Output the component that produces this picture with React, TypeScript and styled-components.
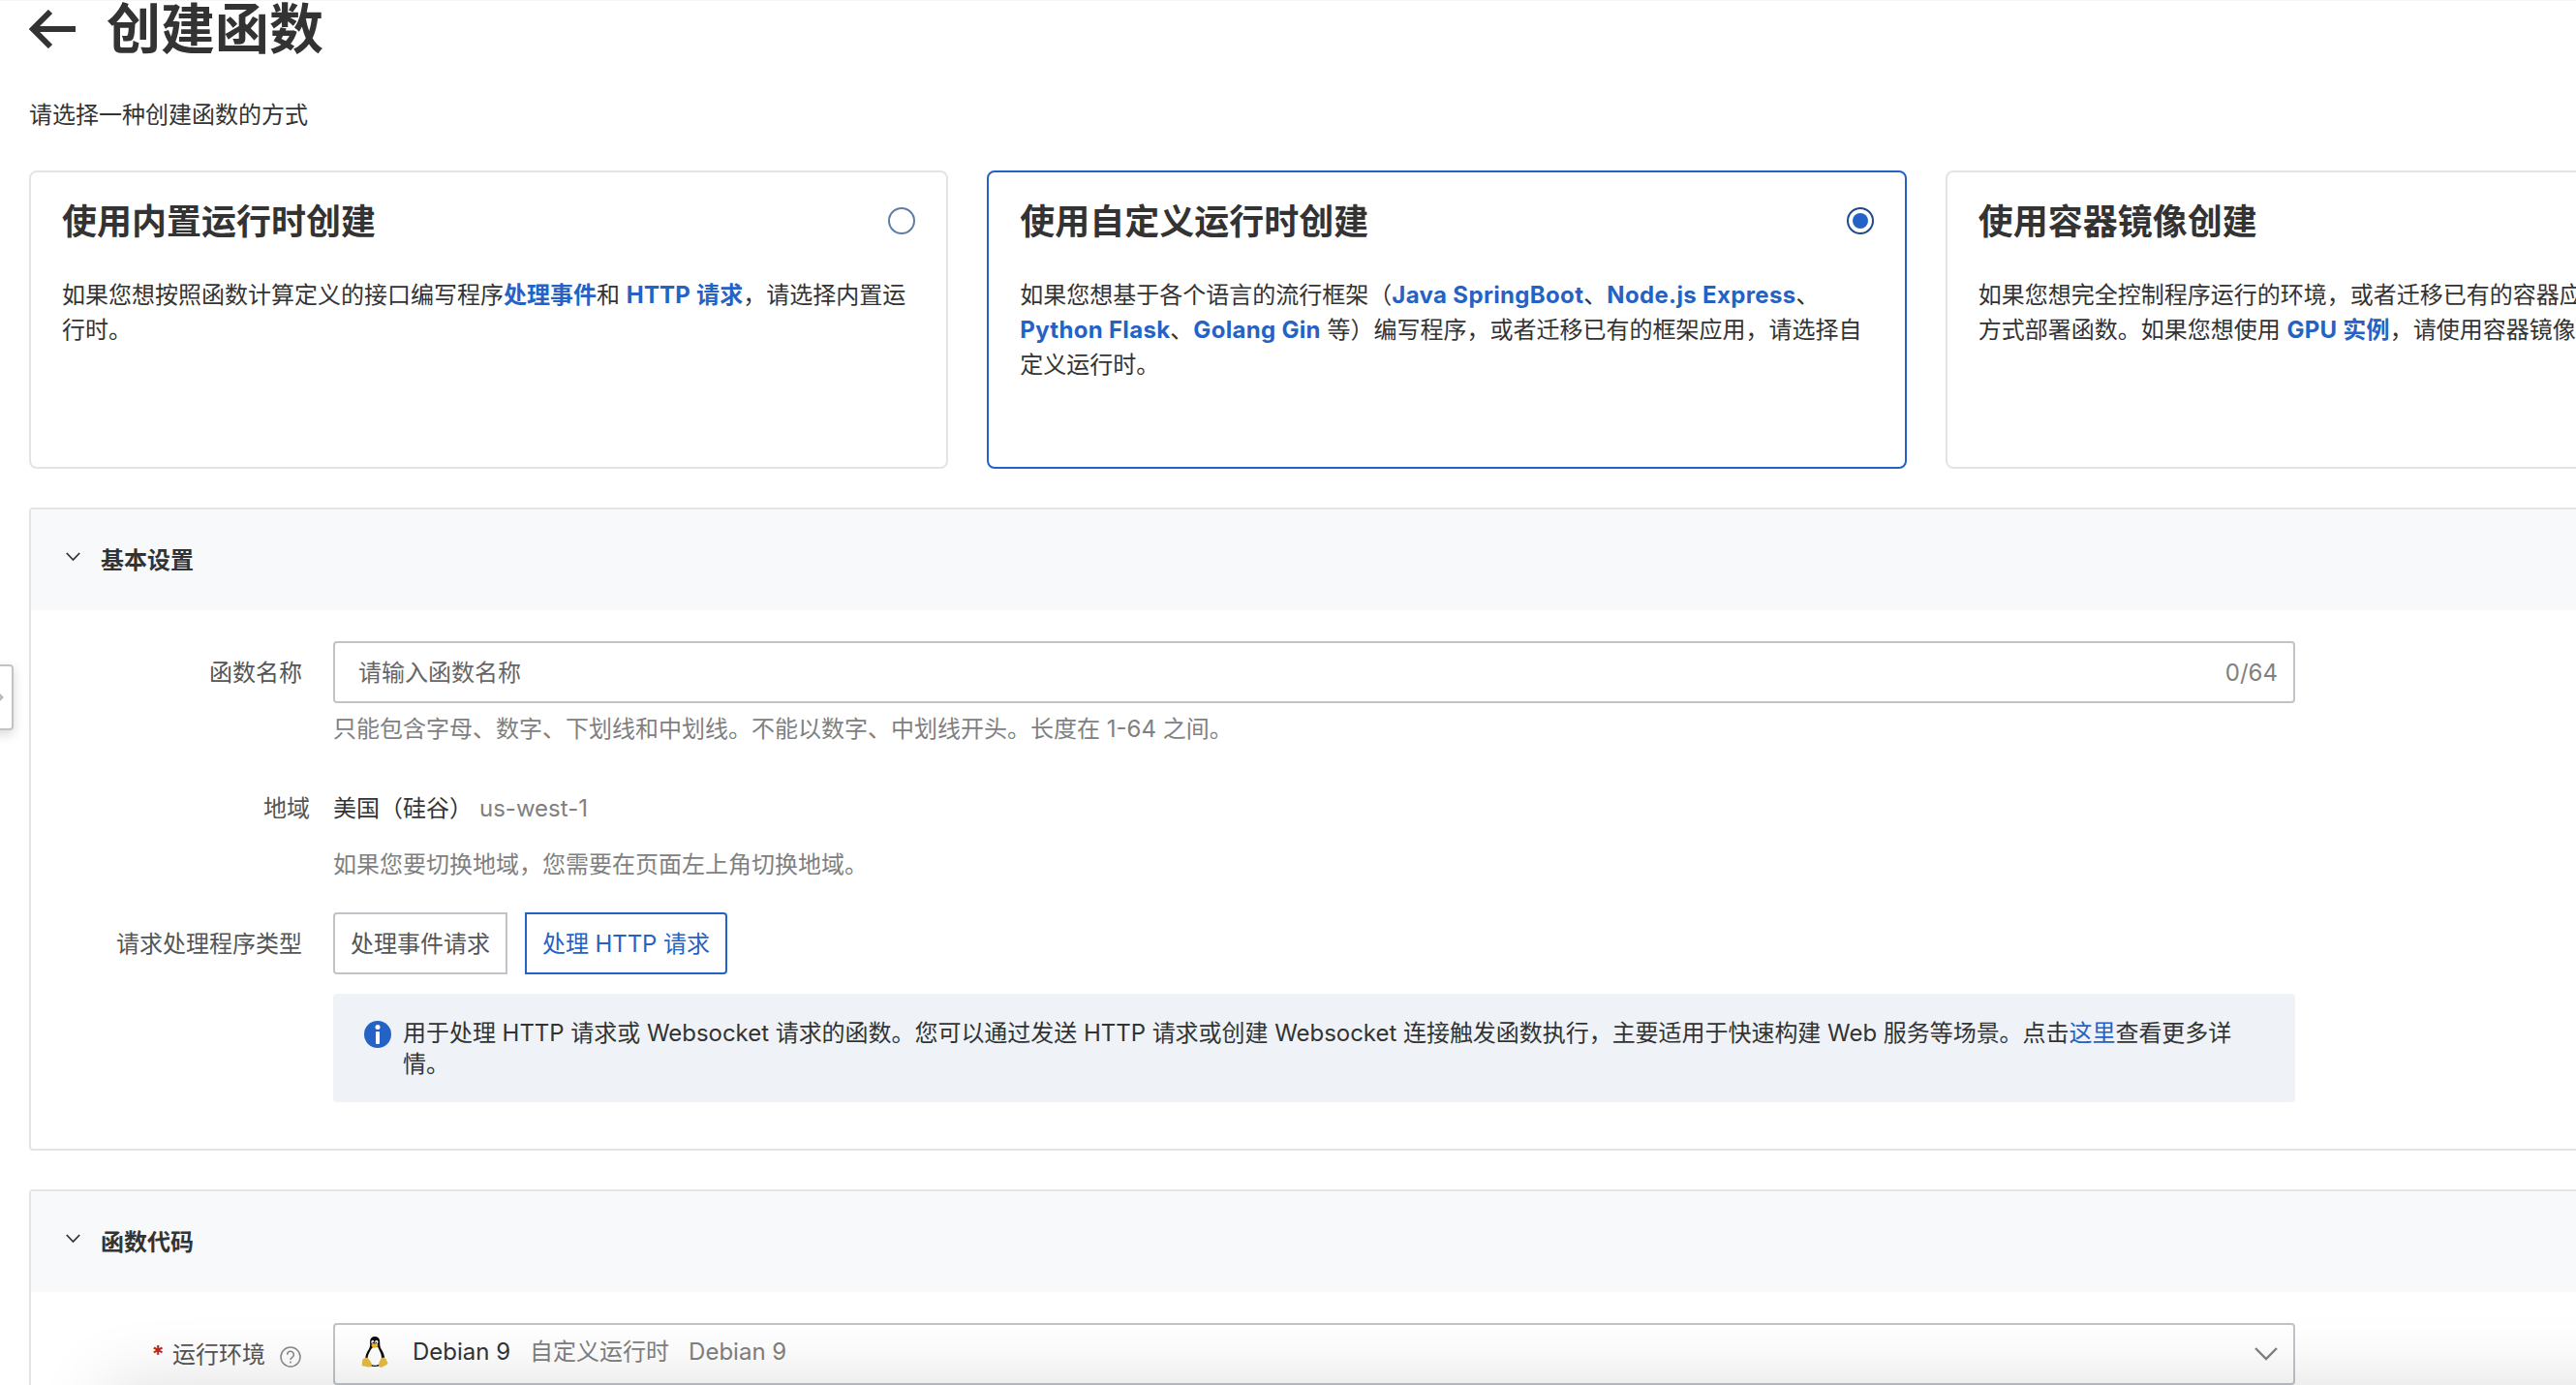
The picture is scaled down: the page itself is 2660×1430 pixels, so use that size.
import React from "react";
import styled, { createGlobalStyle, css } from "styled-components";

const blue = "#2562c5";
const line = "#e3e4e6";
const fieldLine = "#c0c4c9";

const GlobalStyle = createGlobalStyle`
  * { box-sizing: border-box; }
  html, body { margin: 0; background: #fff; overflow: hidden; }
  body {
    color: #333;
    font-family: Inter, "Noto Sans CJK SC", sans-serif;
    font-size: 24px;
    line-height: 36px;
    text-spacing-trim: space-all;
  }
`;

const Page = styled.main`
  position: relative;
  width: 2660px;
  height: 1430px;
  overflow: hidden;
  padding-left: 30px;
  border-top: 1px solid #f6f6f6;
`;

const TitleBar = styled.header`
  display: flex;
  align-items: center;
  gap: 31px;
  height: 58px;
`;

const Title = styled.h1`
  margin: 0;
  font-size: 56px;
  line-height: 58px;
  font-weight: 700;
`;

const Intro = styled.p`
  margin: 42px 0 39px;
`;

const Cards = styled.div`
  display: grid;
  grid-template-columns: repeat(3, 1fr);
  gap: 40px;
  width: 2928px;
`;

const Card = styled.section<{ $selected?: boolean }>`
  height: 308px;
  padding: 32px;
  border: 2px solid ${(p) => (p.$selected ? blue : line)};
  border-radius: 8px;
`;

const CardHead = styled.div`
  display: flex;
  justify-content: space-between;
  align-items: flex-start;
  height: 77px;
`;

const CardTitle = styled.h2`
  margin: 1px 0 0;
  font-size: 36px;
  line-height: 36px;
  font-weight: 700;
`;

const Radio = styled.span<{ $selected?: boolean }>`
  display: grid;
  place-items: center;
  width: 28px;
  height: 28px;
  margin-top: 4px;
  border: 2px solid ${(p) => (p.$selected ? "#1f4a8c" : "#5f7ea6")};
  border-radius: 50%;
  &::after {
    content: "";
    width: 16px;
    height: 16px;
    border-radius: 50%;
    background: ${(p) => (p.$selected ? blue : "transparent")};
  }
`;

const CardText = styled.p`
  margin: 0;
`;

const Strong = styled.b<{ $tracking?: number }>`
  color: ${blue};
  font-weight: 700;
  letter-spacing: ${(p) => p.$tracking ?? 0}px;
`;

const Panel = styled.section<{ $height: number }>`
  width: 2928px;
  height: ${(p) => p.$height}px;
  margin-top: 40px;
  border: 2px solid ${line};
  border-radius: 4px;
`;

const PanelHead = styled.div`
  display: flex;
  align-items: center;
  gap: 21px;
  height: 104px;
  padding-left: 36px;
  background: #f7f9fb;
  svg { margin-bottom: 6px; }
`;

const PanelTitle = styled.h3`
  margin: 2px 0 0;
  font-size: 24px;
  font-weight: 700;
`;

const Form = styled.div`
  display: flex;
  flex-direction: column;
  width: 2338px;
  padding-top: 32px;
`;

const Row = styled.div<{ $height?: number }>`
  display: grid;
  grid-template-columns: 312px 2026px;
  height: ${(p) => (p.$height ? `${p.$height}px` : "auto")};
`;

const Label = styled.label<{ $inset?: number; $height?: number }>`
  display: flex;
  justify-content: flex-end;
  align-items: center;
  height: ${(p) => p.$height ?? 64}px;
  margin-top: 1px;
  padding-right: ${(p) => p.$inset ?? 32}px;
  color: #555;
`;

const Field = styled.div`
  display: flex;
  align-items: center;
  height: 64px;
  padding: 0 16px 0 24px;
  border: 2px solid ${fieldLine};
  border-radius: 4px;
`;

const Placeholder = styled.span`
  flex: 1;
  margin-top: 2px;
  color: #666;
`;

const Muted = styled.span`
  color: #808080;
`;

const Counter = styled(Muted)`
  margin-top: 2px;
`;

const Help = styled.p<{ $top: number }>`
  margin: ${(p) => p.$top}px 0 0;
  color: #808080;
`;

const Region = styled.div`
  display: flex;
  gap: 7px;
  height: 36px;
  margin-top: 1px;
`;

const Choices = styled.div`
  display: flex;
  gap: 18px;
`;

const Choice = styled.button<{ $active?: boolean }>`
  height: 64px;
  padding: 2px 16px 0;
  background: #fff;
  font: inherit;
  white-space: nowrap;
  ${(p) =>
    p.$active
      ? css`
          color: ${blue};
          border: 2px solid ${blue};
          border-radius: 0 4px 4px 0;
          letter-spacing: -0.08px;
        `
      : css`
          color: #555;
          border: 2px solid ${fieldLine};
          border-radius: 4px 0 0 4px;
        `}
`;

const Notice = styled.div`
  display: flex;
  gap: 12px;
  height: 112px;
  margin-top: 20px;
  padding: 25px 56px 0 32px;
  border-radius: 4px;
  background: #eff3f8;
  line-height: 32px;
  letter-spacing: -0.035px;
  svg { flex: none; margin-top: 3px; }
`;

const Link = styled.a`
  color: ${blue};
`;

const Required = styled.span`
  margin: 0 8px 0 0;
  color: #c0281c;
  font-weight: 700;
`;

const LabelText = styled.span`
  margin-right: 15px;
`;

const Runtime = styled.span`
  margin: -4px 0 0 25px;
  color: #333;
`;

const RuntimeNote = styled.span<{ $gap: number }>`
  margin: -4px 0 0 ${(p) => p.$gap}px;
  color: #808080;
`;

const Spacer = styled.span`
  flex: 1;
`;

const SideHandle = styled.div`
  position: absolute;
  left: -14px;
  top: 685px;
  width: 28px;
  height: 68px;
  display: flex;
  align-items: center;
  padding-left: 8px;
  border: 2px solid ${fieldLine};
  border-radius: 4px;
  background: #fff;
  box-shadow: 0 4px 12px rgba(0, 0, 0, 0.16);
`;

const FooterShade = styled.div`
  position: absolute;
  left: 110px;
  right: -200px;
  top: 1430px;
  height: 120px;
  box-shadow: 0 0 76px rgba(0, 0, 0, 0.14);
  pointer-events: none;
`;

const BackArrow = () => (
  <svg width="49" height="40" viewBox="0 0 49 40" fill="none" stroke="#333" strokeWidth="6">
    <path d="M48 20H4M22 2L4 20l18 18" />
  </svg>
);

const SmallChevron = () => (
  <svg width="15" height="10" viewBox="0 0 15 10" fill="none" stroke="#333" strokeWidth="1.8">
    <path d="M0.8 1l6.7 7 6.7-7" />
  </svg>
);

const SelectChevron = () => (
  <svg width="24" height="14" viewBox="0 0 24 14" fill="none" stroke="#808080" strokeWidth="2.4">
    <path d="M1 1l11 11L23 1" />
  </svg>
);

const InfoIcon = () => (
  <svg width="28" height="28" viewBox="0 0 28 28">
    <circle cx="14" cy="14" r="14" fill={blue} />
    <circle cx="14" cy="6.600" r="2.500" fill="#fff" />
    <rect x="12" y="11" width="4" height="13" rx="1" fill="#fff" />
  </svg>
);

const HelpMark = styled.svg`
  margin: 3px 1px 0 0;
`;

const HelpIcon = () => (
  <HelpMark width="22" height="22" viewBox="0 0 22 22" fill="none" stroke="#888" strokeWidth="1.5">
    <circle cx="11" cy="11" r="10" />
    <path d="M7.700 8.700a3.300 3.300 0 1 1 5 2.700c-1.100.7-1.700 1.100-1.700 2.500" />
    <path d="M11 15.500v1.900" />
  </HelpMark>
);

const Tux = styled.svg`
  margin: -4px 0 0 3px;
`;

const Penguin = () => (
  <Tux width="28" height="34" viewBox="0 0 28 34">
    <path d="M14 1c-3 0-4.900 2.200-4.900 5.500 0 3 .4 4.700-1.200 7.600C5.800 17 4.300 20.500 4.300 24c0 4.500 4 8 9.700 8s10.200-3.500 10.200-8c0-3.700-1.600-7-3.500-9.900-1.400-2.200-1.500-4.700-1.500-7.600C19.200 3.200 17.300 1 14 1z" fill="#0b0b0b" />
    <path d="M12.600 11.500c-2 1.500-2.800 3.300-4.400 6.300-2 3.900-2.300 8.300-.3 10.800 2.100 2.500 8.200 3 11 .7 2.500-2.600 2.600-7.300 1.200-11-1.100-2.900-2.300-5.100-3.100-6.800z" fill="#fff" />
    <ellipse cx="11.800" cy="6.800" rx="1.500" ry="2" fill="#fff" />
    <ellipse cx="15.800" cy="6.800" rx="1.700" ry="2.100" fill="#fff" />
    <circle cx="12.200" cy="7.200" r=".8" fill="#111" />
    <circle cx="15.400" cy="7.200" r=".8" fill="#111" />
    <path d="M10.300 9.700c1.500-1.600 4.700-1.900 7.100-.2.600 1.300-2.100 3.200-3.800 3.200-1.500 0-3.200-1.600-3.300-3z" fill="#efb32c" />
    <path d="M1.600 24c2.100-.2 3.900-2.300 5.400-.8 1.300 1.900 3.600 4.300 4 6.100.3 2.700-2.100 3.700-4.200 3-2.100-.6-5.500-.6-6-1.600-.5-1.300.7-4.600.8-6.700z" fill="#e6bd45" />
    <path d="M26 24.500c-1.300-.3-2.200-2.700-4.400-1.600-2 1-3.600 5.500-3.500 7.500.2 2.600 2.900 3 4.600 1.700 1.300-1 4.700-2.300 4.800-3.400.2-1.100-1.800-2.600-1.500-4.200z" fill="#e6bd45" />
  </Tux>
);

const HandleArrow = () => (
  <svg width="8" height="10" viewBox="0 0 8 10">
    <path d="M3 0l5 5-5 5z" fill="#bbb" />
  </svg>
);

export default function App() {
  return (
    <Page>
      <GlobalStyle />
      <TitleBar>
        <BackArrow />
        <Title>创建函数</Title>
      </TitleBar>
      <Intro>请选择一种创建函数的方式</Intro>

      <Cards>
        <Card>
          <CardHead>
            <CardTitle>使用内置运行时创建</CardTitle>
            <Radio />
          </CardHead>
          <CardText>
            如果您想按照函数计算定义的接口编写程序<Strong>处理事件</Strong>和 <Strong $tracking={0.2}>HTTP 请求</Strong>，请选择内置运行时。
          </CardText>
        </Card>
        <Card $selected>
          <CardHead>
            <CardTitle>使用自定义运行时创建</CardTitle>
            <Radio $selected />
          </CardHead>
          <CardText>
            如果您想基于各个语言的流行框架（<Strong $tracking={0.34}>Java SpringBoot</Strong>、<Strong $tracking={0.34}>Node.js Express</Strong>、
            <br />
            <Strong $tracking={0.3}>Python Flask</Strong>、<Strong $tracking={0.3}>Golang Gin</Strong> 等）编写程序，或者迁移已有的框架应用，请选择自定义运行时。
          </CardText>
        </Card>
        <Card>
          <CardHead>
            <CardTitle>使用容器镜像创建</CardTitle>
            <Radio />
          </CardHead>
          <CardText>
            如果您想完全控制程序运行的环境，或者迁移已有的容器应用，以镜像的
            <br />
            方式部署函数。如果您想使用 <Strong $tracking={0.25}>GPU 实例</Strong>，请使用容器镜像。
          </CardText>
        </Card>
      </Cards>

      <Panel $height={664}>
        <PanelHead>
          <SmallChevron />
          <PanelTitle>基本设置</PanelTitle>
        </PanelHead>
        <Form>
          <Row $height={154}>
            <Label>函数名称</Label>
            <div>
              <Field>
                <Placeholder>请输入函数名称</Placeholder>
                <Counter>0/64</Counter>
              </Field>
              <Help $top={9}>只能包含字母、数字、下划线和中划线。不能以数字、中划线开头。长度在 1-64 之间。</Help>
            </div>
          </Row>
          <Row $height={126}>
            <Label $inset={24} $height={36}>地域</Label>
            <div>
              <Region>
                <span>美国（硅谷）</span>
                <Muted>us-west-1</Muted>
              </Region>
              <Help $top={22}>如果您要切换地域，您需要在页面左上角切换地域。</Help>
            </div>
          </Row>
          <Row>
            <Label>请求处理程序类型</Label>
            <div>
              <Choices>
                <Choice>处理事件请求</Choice>
                <Choice $active>处理 HTTP 请求</Choice>
              </Choices>
              <Notice>
                <InfoIcon />
                <span>
                  用于处理 HTTP 请求或 Websocket 请求的函数。您可以通过发送 HTTP 请求或创建 Websocket 连接触发函数执行，主要适用于快速构建 Web 服务等场景。点击<Link>这里</Link>查看更多详情。
                </span>
              </Notice>
            </div>
          </Row>
        </Form>
      </Panel>

      <Panel $height={300}>
        <PanelHead>
          <SmallChevron />
          <PanelTitle>函数代码</PanelTitle>
        </PanelHead>
        <Form>
          <Row>
            <Label>
              <Required>*</Required>
              <LabelText>运行环境</LabelText>
              <HelpIcon />
            </Label>
            <Field>
              <Penguin />
              <Runtime>Debian 9</Runtime>
              <RuntimeNote $gap={20}>自定义运行时</RuntimeNote>
              <RuntimeNote $gap={20}>Debian 9</RuntimeNote>
              <Spacer />
              <SelectChevron />
            </Field>
          </Row>
        </Form>
      </Panel>

      <SideHandle>
        <HandleArrow />
      </SideHandle>
      <FooterShade />
    </Page>
  );
}
